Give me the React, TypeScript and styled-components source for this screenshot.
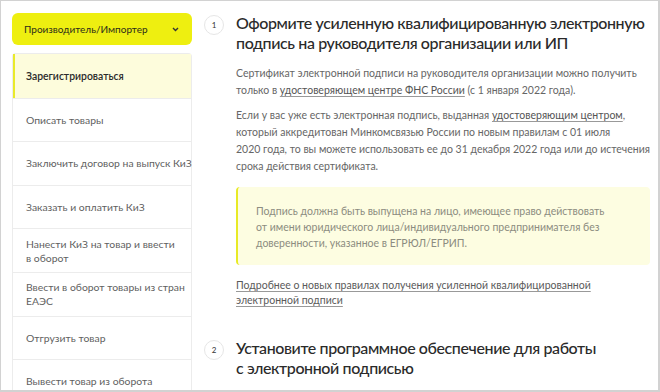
import React from "react";
import styled, { createGlobalStyle } from "styled-components";

const Global = createGlobalStyle`
  html, body { margin: 0; padding: 0; background: #fff; }
  * { box-sizing: border-box; }
`;

const Frame = styled.div`
  width: 660px;
  height: 392px;
  overflow: hidden;
  border: 1px solid #d2d2d2;
  border-right-width: 2px;
  border-bottom-width: 2px;
  display: grid;
  grid-template-columns: 180px 1fr;
  column-gap: 12px;
  padding: 12px 0 0 11px;
  font-family: Lato, "Liberation Sans", sans-serif;
  background: #fff;
`;

const Sidebar = styled.aside`
  display: flex;
  flex-direction: column;
  gap: 8px;
`;

const RoleButton = styled.button`
  height: 32px;
  border: none;
  border-radius: 6px;
  background: #eeef10;
  display: flex;
  align-items: center;
  justify-content: space-between;
  padding: 0 13px 0 12px;
  font-family: inherit;
  font-size: 10px;
  color: #2b2b1a;
  cursor: pointer;
`;

const Menu = styled.nav`
  border: 1px solid #ececec;
  border-bottom: none;
  border-radius: 4px 4px 0 0;
  display: flex;
  flex-direction: column;
`;

const MenuItem = styled.div<{ $active?: boolean }>`
  height: 43.6px;
  flex: none;
  display: flex;
  flex-direction: column;
  justify-content: center;
  padding: 0 4px 0 ${(p) => (p.$active ? "11px" : "13px")};
  border-top: ${(p) => (p.$active ? "none" : "1px solid #ececec")};
  border-left: ${(p) => (p.$active ? "2px solid #e9ea2a" : "none")};
  background: ${(p) => (p.$active ? "#fdfcdc" : "#fff")};
  font-size: 10.4px;
  line-height: 14px;
  white-space: nowrap;
  color: ${(p) => (p.$active ? "#2a2a2a" : "#5f5f5f")};
  font-weight: ${(p) => (p.$active ? 600 : 400)};
`;

const Main = styled.main`
  display: flex;
  flex-direction: column;
  padding-right: 10px;
`;

const Step = styled.section<{ $gap?: number }>`
  display: grid;
  grid-template-columns: 20px 1fr;
  column-gap: 12px;
  margin-top: ${(p) => p.$gap ?? 0}px;
`;

const StepNum = styled.div`
  width: 20px;
  height: 20px;
  border-radius: 50%;
  border: 1px solid #e6e6e6;
  display: flex;
  align-items: center;
  justify-content: center;
  font-size: 8px;
  color: #333;
  margin-top: 2px;
`;

const StepTitle = styled.h2`
  margin: 0;
  font-family: Lato, sans-serif;
  font-size: 16px;
  line-height: 20px;
  font-weight: 500;
  letter-spacing: -0.4px;
  white-space: nowrap;
  color: #2a2a2a;
`;

const Body = styled.div`
  grid-column: 2;
  display: flex;
  flex-direction: column;
`;

const Para = styled.p<{ $gap: number }>`
  margin: ${(p) => p.$gap}px 0 0;
  font-size: 10.5px;
  line-height: 17px;
  white-space: nowrap;
  color: #666;
`;

const Link = styled.a`
  color: #555;
  text-decoration: underline;
  text-underline-offset: 2px;
  text-decoration-color: #999;
`;

const Callout = styled.div`
  margin-top: 12px;
  background: #fdfde1;
  border-left: 2px solid #e8ea26;
  border-radius: 4px;
  padding: 16px 20px 14px 18px;
  font-size: 10.5px;
  line-height: 16px;
  white-space: nowrap;
  color: #8c8c80;
`;

const MoreLink = styled.a`
  display: block;
  margin-top: 13px;
  font-size: 10.5px;
  line-height: 15px;
  color: #5a5a5a;
  text-decoration: underline;
  text-underline-offset: 2px;
  text-decoration-color: #999;
`;

const Chevron = () => (
  <svg width="7" height="5" viewBox="0 0 7 5" fill="none">
    <path d="M1 1l2.5 2.5L6 1" stroke="#333" strokeWidth="1.4" />
  </svg>
);

const items: string[][] = [
  ["Описать товары"],
  ["Заключить договор на выпуск КиЗ"],
  ["Заказать и оплатить КиЗ"],
  ["Нанести КиЗ на товар и ввести", "в оборот"],
  ["Ввести в оборот товары из стран", "ЕАЭС"],
  ["Отгрузить товар"],
  ["Вывести товар из оборота"],
];

export default function App() {
  return (
    <>
      <Global />
      <Frame>
        <Sidebar>
          <RoleButton>
            <span>Производитель/Импортер</span>
            <Chevron />
          </RoleButton>
          <Menu>
            <MenuItem $active>Зарегистрироваться</MenuItem>
            {items.map((lines) => (
              <MenuItem key={lines[0]}>
                {lines.map((l) => (
                  <span key={l}>{l}</span>
                ))}
              </MenuItem>
            ))}
          </Menu>
        </Sidebar>
        <Main>
          <Step>
            <StepNum>1</StepNum>
            <StepTitle>
              Оформите усиленную квалифицированную электронную
              <br />
              подпись на руководителя организации или ИП
            </StepTitle>
            <Body>
              <Para $gap={12}>
                Сертификат электронной подписи на руководителя организации можно
                получить
                <br />
                только в <Link>удостоверяющем центре ФНС России</Link> (с 1
                января 2022 года).
              </Para>
              <Para $gap={8}>
                Если у вас уже есть электронная подпись, выданная{" "}
                <Link>удостоверяющим центром</Link>,
                <br />
                который аккредитован Минкомсвязью России по новым правилам с 01
                июля
                <br />
                2020 года, то вы можете использовать ее до 31 декабря 2022 года
                или до истечения
                <br />
                срока действия сертификата.
              </Para>
              <Callout>
                Подпись должна быть выпущена на лицо, имеющее право действовать
                <br />
                от имени юридического лица/индивидуального предпринимателя без
                <br />
                доверенности, указанное в ЕГРЮЛ/ЕГРИП.
              </Callout>
              <MoreLink>
                Подробнее о новых правилах получения усиленной квалифицированной
                <br />
                электронной подписи
              </MoreLink>
            </Body>
          </Step>
          <Step $gap={30}>
            <StepNum>2</StepNum>
            <StepTitle>
              Установите программное обеспечение для работы
              <br />с электронной подписью
            </StepTitle>
          </Step>
        </Main>
      </Frame>
    </>
  );
}
